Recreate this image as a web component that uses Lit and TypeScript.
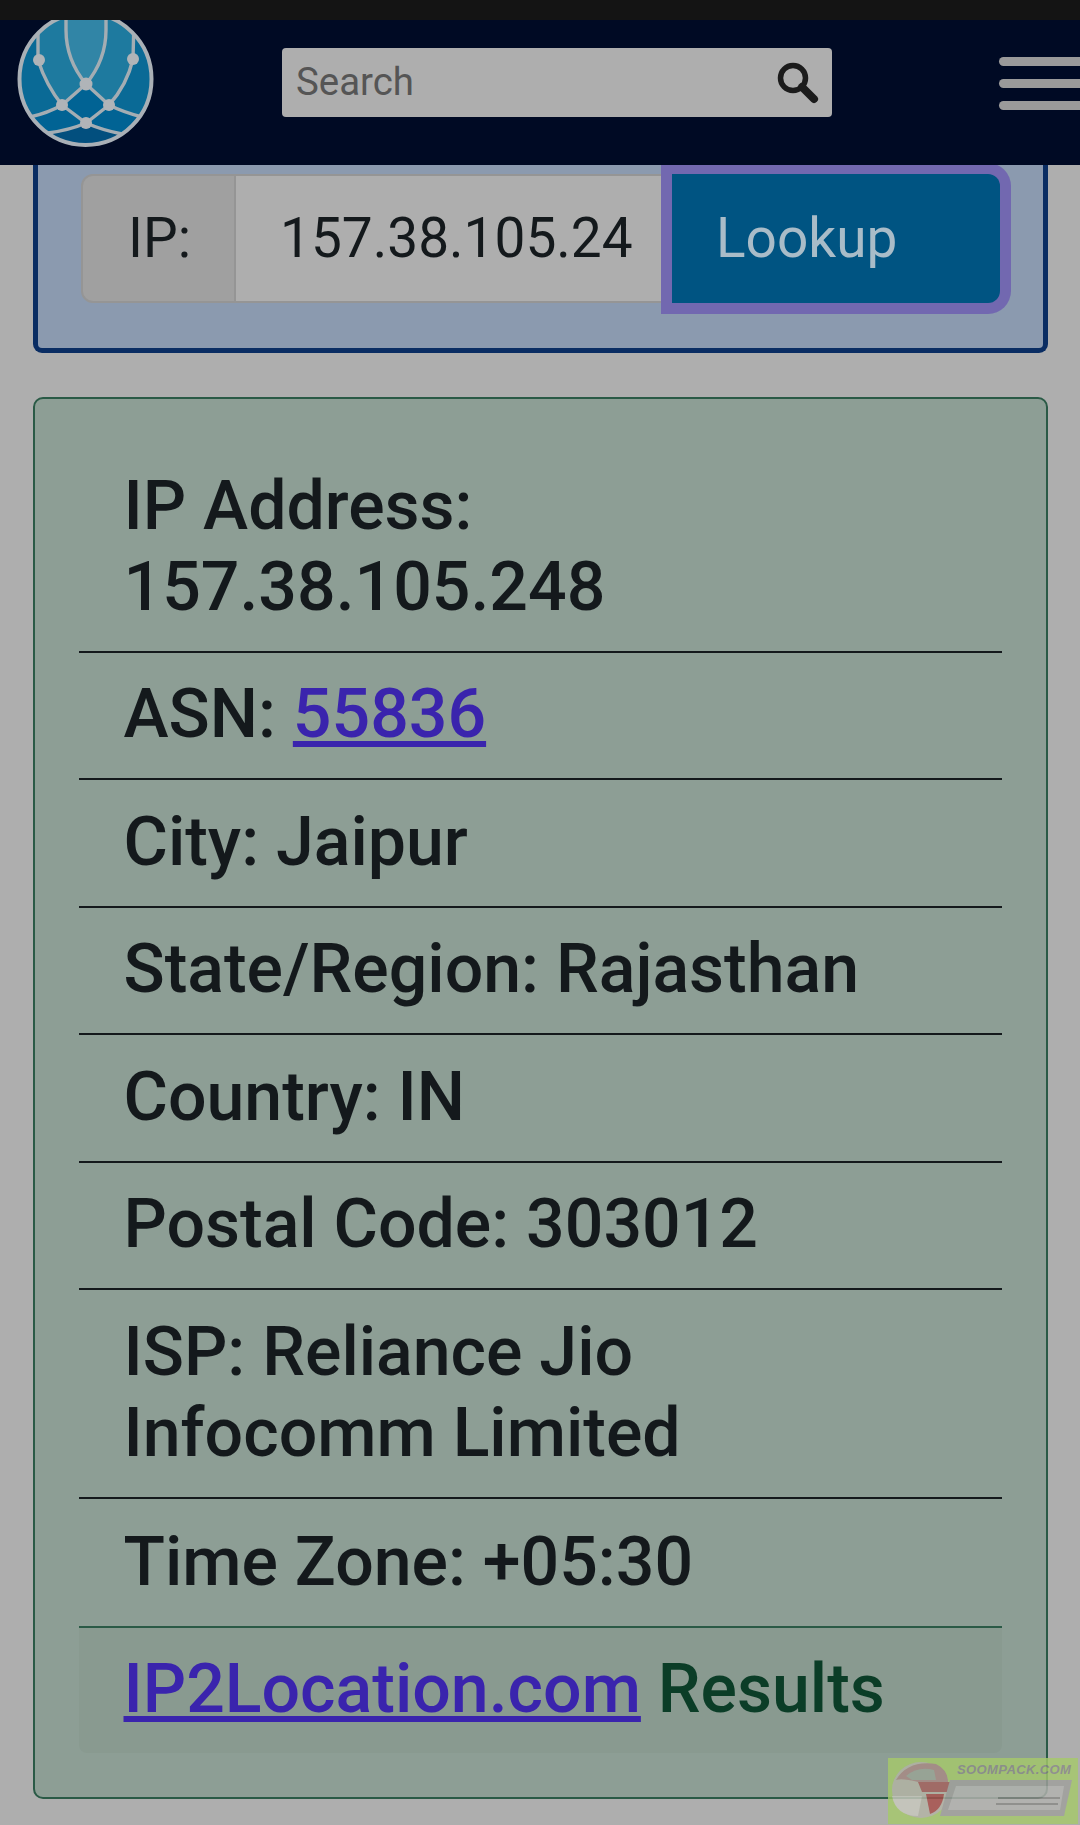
import { LitElement, html, css } from "lit";
import { customElement } from "lit/decorators.js";

@customElement("app-root")
export class AppRoot extends LitElement {
  static styles = css`
    :host { display: block; position: relative; width: 1080px; height: 1825px; overflow: hidden; background: #aeaeae; font-family: Roboto, "Liberation Sans", sans-serif; color: #14191c; }
    .status { height: 20px; background: #141414; }
    .header { position: relative; z-index: 2; height: 145px; background: #000a24; display: flex; align-items: flex-start; overflow: hidden; }
    .logo { display: block; width: 137px; height: 127px; margin-left: 17px; flex: none; }
    .search { margin: 28px 0 0 128px; width: 550px; height: 69px; box-sizing: border-box; background: #aeaeae; border-radius: 4px; display: flex; align-items: center; justify-content: space-between; padding: 0 12px 0 14px; flex: none; }
    .search span { font-size: 38.4px; line-height: 67px; height: 69px; color: #555; }
    .search svg { width: 44px; height: 44px; display: block; }
    .burger { margin: 37px 0 0 167px; display: flex; flex-direction: column; gap: 13px; flex: none; }
    .burger i { display: block; width: 100px; height: 9px; border-radius: 5px; background: #9a9a9a; }
    .lookup { margin: 0 32px 0 33px; height: 188px; box-sizing: border-box; background: #8b9aaf; border: 5px solid #0a2d63; border-top: 0; border-radius: 0 0 9px 9px; padding: 9px 43px 0; }
    .group { display: flex; height: 129px; }
    .label { width: 155px; box-sizing: border-box; padding: 0 0 2px 45px; display: flex; align-items: center; background: #a0a0a0; border: 2px solid #959595; border-radius: 12px 0 0 12px; font-size: 55px; flex: none; }
    .input { flex: 1; min-width: 0; width: 0; box-sizing: border-box; background: #aeaeae; border: 2px solid #959595; border-left: 0; border-radius: 0; padding: 0 37px 2px 44px; outline: none; font: inherit; font-size: 55px; color: #14191c; }
    .btn { position: relative; width: 328px; flex: none; box-sizing: border-box; background: #005482; color: #a9bcc8; border-radius: 0 12px 12px 0; box-shadow: 0 0 0 11px #7268b0; display: flex; align-items: center; padding: 0 0 2px 44px; font-size: 55px; }
    .result { margin: 44px 32px 0 33px; height: 1402px; box-sizing: border-box; background: #8d9e95; border: 2px solid #2a5a46; border-radius: 10px; padding: 45px 44px; }
    .row { padding: 21.5px 44px 23px 44.5px; border-bottom: 2px solid #14191c; font-size: 68px; font-weight: 500; line-height: 81px; }
    .row.last { border-bottom-color: #2a5a46; padding-top: 23px; }
    .row.foot { border-bottom: 0; padding-bottom: 23px; background: #899a90; color: #0b3d27; border-radius: 0 0 8px 8px; }
    a { color: #3a24ad; text-decoration: underline; }
    .mark { position: absolute; left: 888px; top: 1758px; width: 190px; height: 66px; background: #a6c96b; opacity: .82; }
    .mark svg { position: absolute; inset: 0; width: 100%; height: 100%; }
    .mark span { position: absolute; left: 69px; top: 5px; font-family: "Liberation Sans", sans-serif; font-size: 13px; line-height: 14px; letter-spacing: .4px; font-style: italic; font-weight: 700; color: #8a8a8a; white-space: nowrap; }
  `;

  render() {
    const rows = [
      html`IP Address:<br />157.38.105.248`,
      html`ASN: <a href="#">55836</a>`,
      html`City: Jaipur`,
      html`State/Region: Rajasthan`,
      html`Country: IN`,
      html`Postal Code: 303012`,
      html`ISP: Reliance Jio<br />Infocomm Limited`,
    ];
    return html`
      <div class="status"></div>
      <div class="header">
        <svg class="logo" viewBox="17 20 137 127">
          <defs><clipPath id="c"><circle cx="85.5" cy="79" r="67"></circle></clipPath></defs>
          <g clip-path="url(#c)">
            <rect x="17" y="10" width="137" height="140" fill="#0a6a96"></rect>
            <path d="M38 10H134V59Q127 85 109 105L86 84L62 105Q46 85 39 60Z" fill="#1e7a9f"></path>
            <path d="M66 10H106V30Q106 60 86 84Q66 60 66 30Z" fill="#3185a6"></path>
            <path d="M33 116L62 105L86 84L109 105L139 116L130 150H40Z" fill="#016394"></path>
            <path d="M50 133Q70 130 86 123Q102 130 120 133L110 150H60Z" fill="#024f7e"></path>
            <g fill="none" stroke="#a4adb3" stroke-width="3.4">
              <path d="M66 10V30Q66 60 86 84Q106 60 106 30V10"></path>
              <path d="M38 20V60Q46 85 62 105L86 84L109 105Q127 85 133 59L134 20"></path>
              <path d="M62 105L86 123L109 105M30 117Q48 113 62 105M109 105Q123 112 142 117M48 133Q70 130 86 123Q102 130 122 134"></path>
            </g>
          </g>
          <circle cx="85.5" cy="79" r="66" fill="none" stroke="#a9b0b6" stroke-width="4"></circle>
          <circle cx="39" cy="60" r="6" fill="#b0b4b8"></circle>
          <circle cx="133" cy="59" r="6" fill="#b0b4b8"></circle>
          <circle cx="86" cy="84" r="6.5" fill="#b0b4b8"></circle>
          <circle cx="62" cy="105" r="6" fill="#b0b4b8"></circle>
          <circle cx="109" cy="105" r="6" fill="#b0b4b8"></circle>
          <circle cx="86" cy="123" r="6" fill="#b0b4b8"></circle>
        </svg>
        <div class="search">
          <span>Search</span>
          <svg viewBox="0 0 44 44">
            <circle cx="17" cy="17" r="12.5" fill="none" stroke="#1c1c1c" stroke-width="5.5"></circle>
            <path d="M26 26L38 38" stroke="#1c1c1c" stroke-width="8" stroke-linecap="round"></path>
          </svg>
        </div>
        <div class="burger"><i></i><i></i><i></i></div>
      </div>
      <div class="lookup">
        <div class="group">
          <div class="label">IP:</div>
          <input class="input" .value=${"157.38.105.248"} />
          <div class="btn">Lookup</div>
        </div>
      </div>
      <div class="result">
        ${rows.map((r) => html`<div class="row">${r}</div>`)}
        <div class="row last">Time Zone: +05:30</div>
        <div class="row foot"><a href="#">IP2Location.com</a> Results</div>
      </div>
      <div class="mark">
        <svg viewBox="0 0 190 66">
          <ellipse cx="33" cy="32" rx="29" ry="28" fill="#b5b5a6"></ellipse>
          <path d="M8 22Q20 2 48 6Q60 12 60 24H30Q14 20 8 22Z" fill="#a88a84"></path>
          <path d="M18 18Q30 8 46 12L48 22H24Z" fill="#9aa596"></path>
          <path d="M30 24H62V34H34Z" fill="#a5615c"></path>
          <path d="M38 36H56Q54 52 42 56Z" fill="#a84f4b"></path>
          <path d="M4 38H34L30 58Q8 58 4 38Z" fill="#c9c9be"></path>
          <path d="M62 22H184L176 58H52Z" fill="#a0a09c"></path>
          <path d="M68 28H176L172 52H60Z" fill="#b4b4b0"></path>
          <path d="M110 40H172M108 46H170" stroke="#8a8a86" stroke-width="2"></path>
        </svg>
        <span>SOOMPACK.COM</span>
      </div>
    `;
  }
}
